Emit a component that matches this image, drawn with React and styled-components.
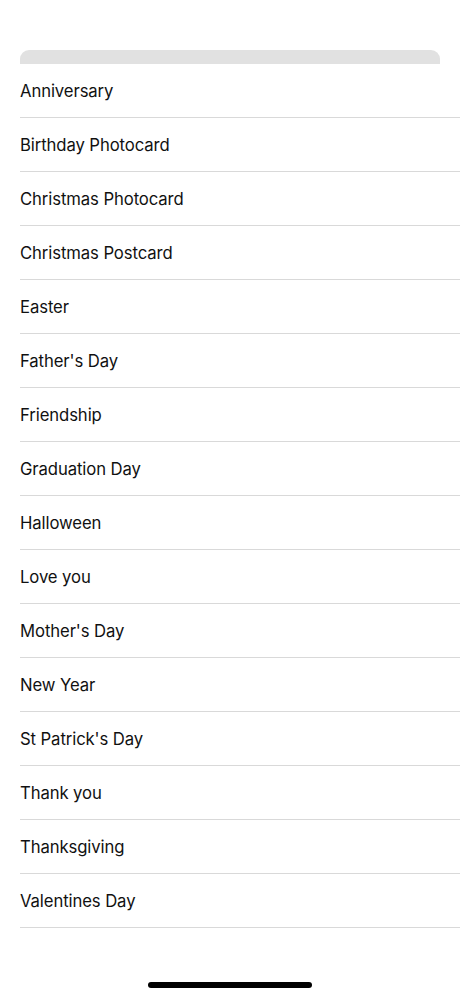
import React from 'react';
import styled, { createGlobalStyle } from 'styled-components';

const GlobalStyle = createGlobalStyle`
  html, body {
    margin: 0;
    padding: 0;
    background: #ffffff;
  }
  body {
    font-family: Inter, "Liberation Sans", Arial, sans-serif;
    -webkit-font-smoothing: antialiased;
  }
`;

const Screen = styled.div`
  width: 460px;
  min-height: 999px;
  display: flex;
  flex-direction: column;
  box-sizing: border-box;
  padding-top: 50px;
`;

const SheetTab = styled.div`
  margin: 0 20px;
  height: 14px;
  background: #e1e1e1;
  border-radius: 9px 9px 0 0;
`;

const List = styled.ul`
  list-style: none;
  margin: 0;
  padding: 0 0 0 20px;
`;

const Row = styled.li`
  height: 53px;
  display: flex;
  align-items: center;
  padding-top: 1px;
  box-sizing: content-box;
  height: 52px;
  border-bottom: 1px solid #d9d9d9;
  font-size: 16.7px;
  color: #111111;
  letter-spacing: -0.1px;
`;

const HomeBar = styled.div`
  margin: auto auto 11px;
  width: 164px;
  height: 6px;
  border-radius: 3px;
  background: #000000;
`;

const occasions = [
  'Anniversary',
  'Birthday Photocard',
  'Christmas Photocard',
  'Christmas Postcard',
  'Easter',
  "Father's Day",
  'Friendship',
  'Graduation Day',
  'Halloween',
  'Love you',
  "Mother's Day",
  'New Year',
  "St Patrick's Day",
  'Thank you',
  'Thanksgiving',
  'Valentines Day',
];

const App = () => (
  <>
    <GlobalStyle />
    <Screen>
      <SheetTab />
      <List>
        {occasions.map((name) => (
          <Row key={name}>{name}</Row>
        ))}
      </List>
      <HomeBar />
    </Screen>
  </>
);

export default App;
